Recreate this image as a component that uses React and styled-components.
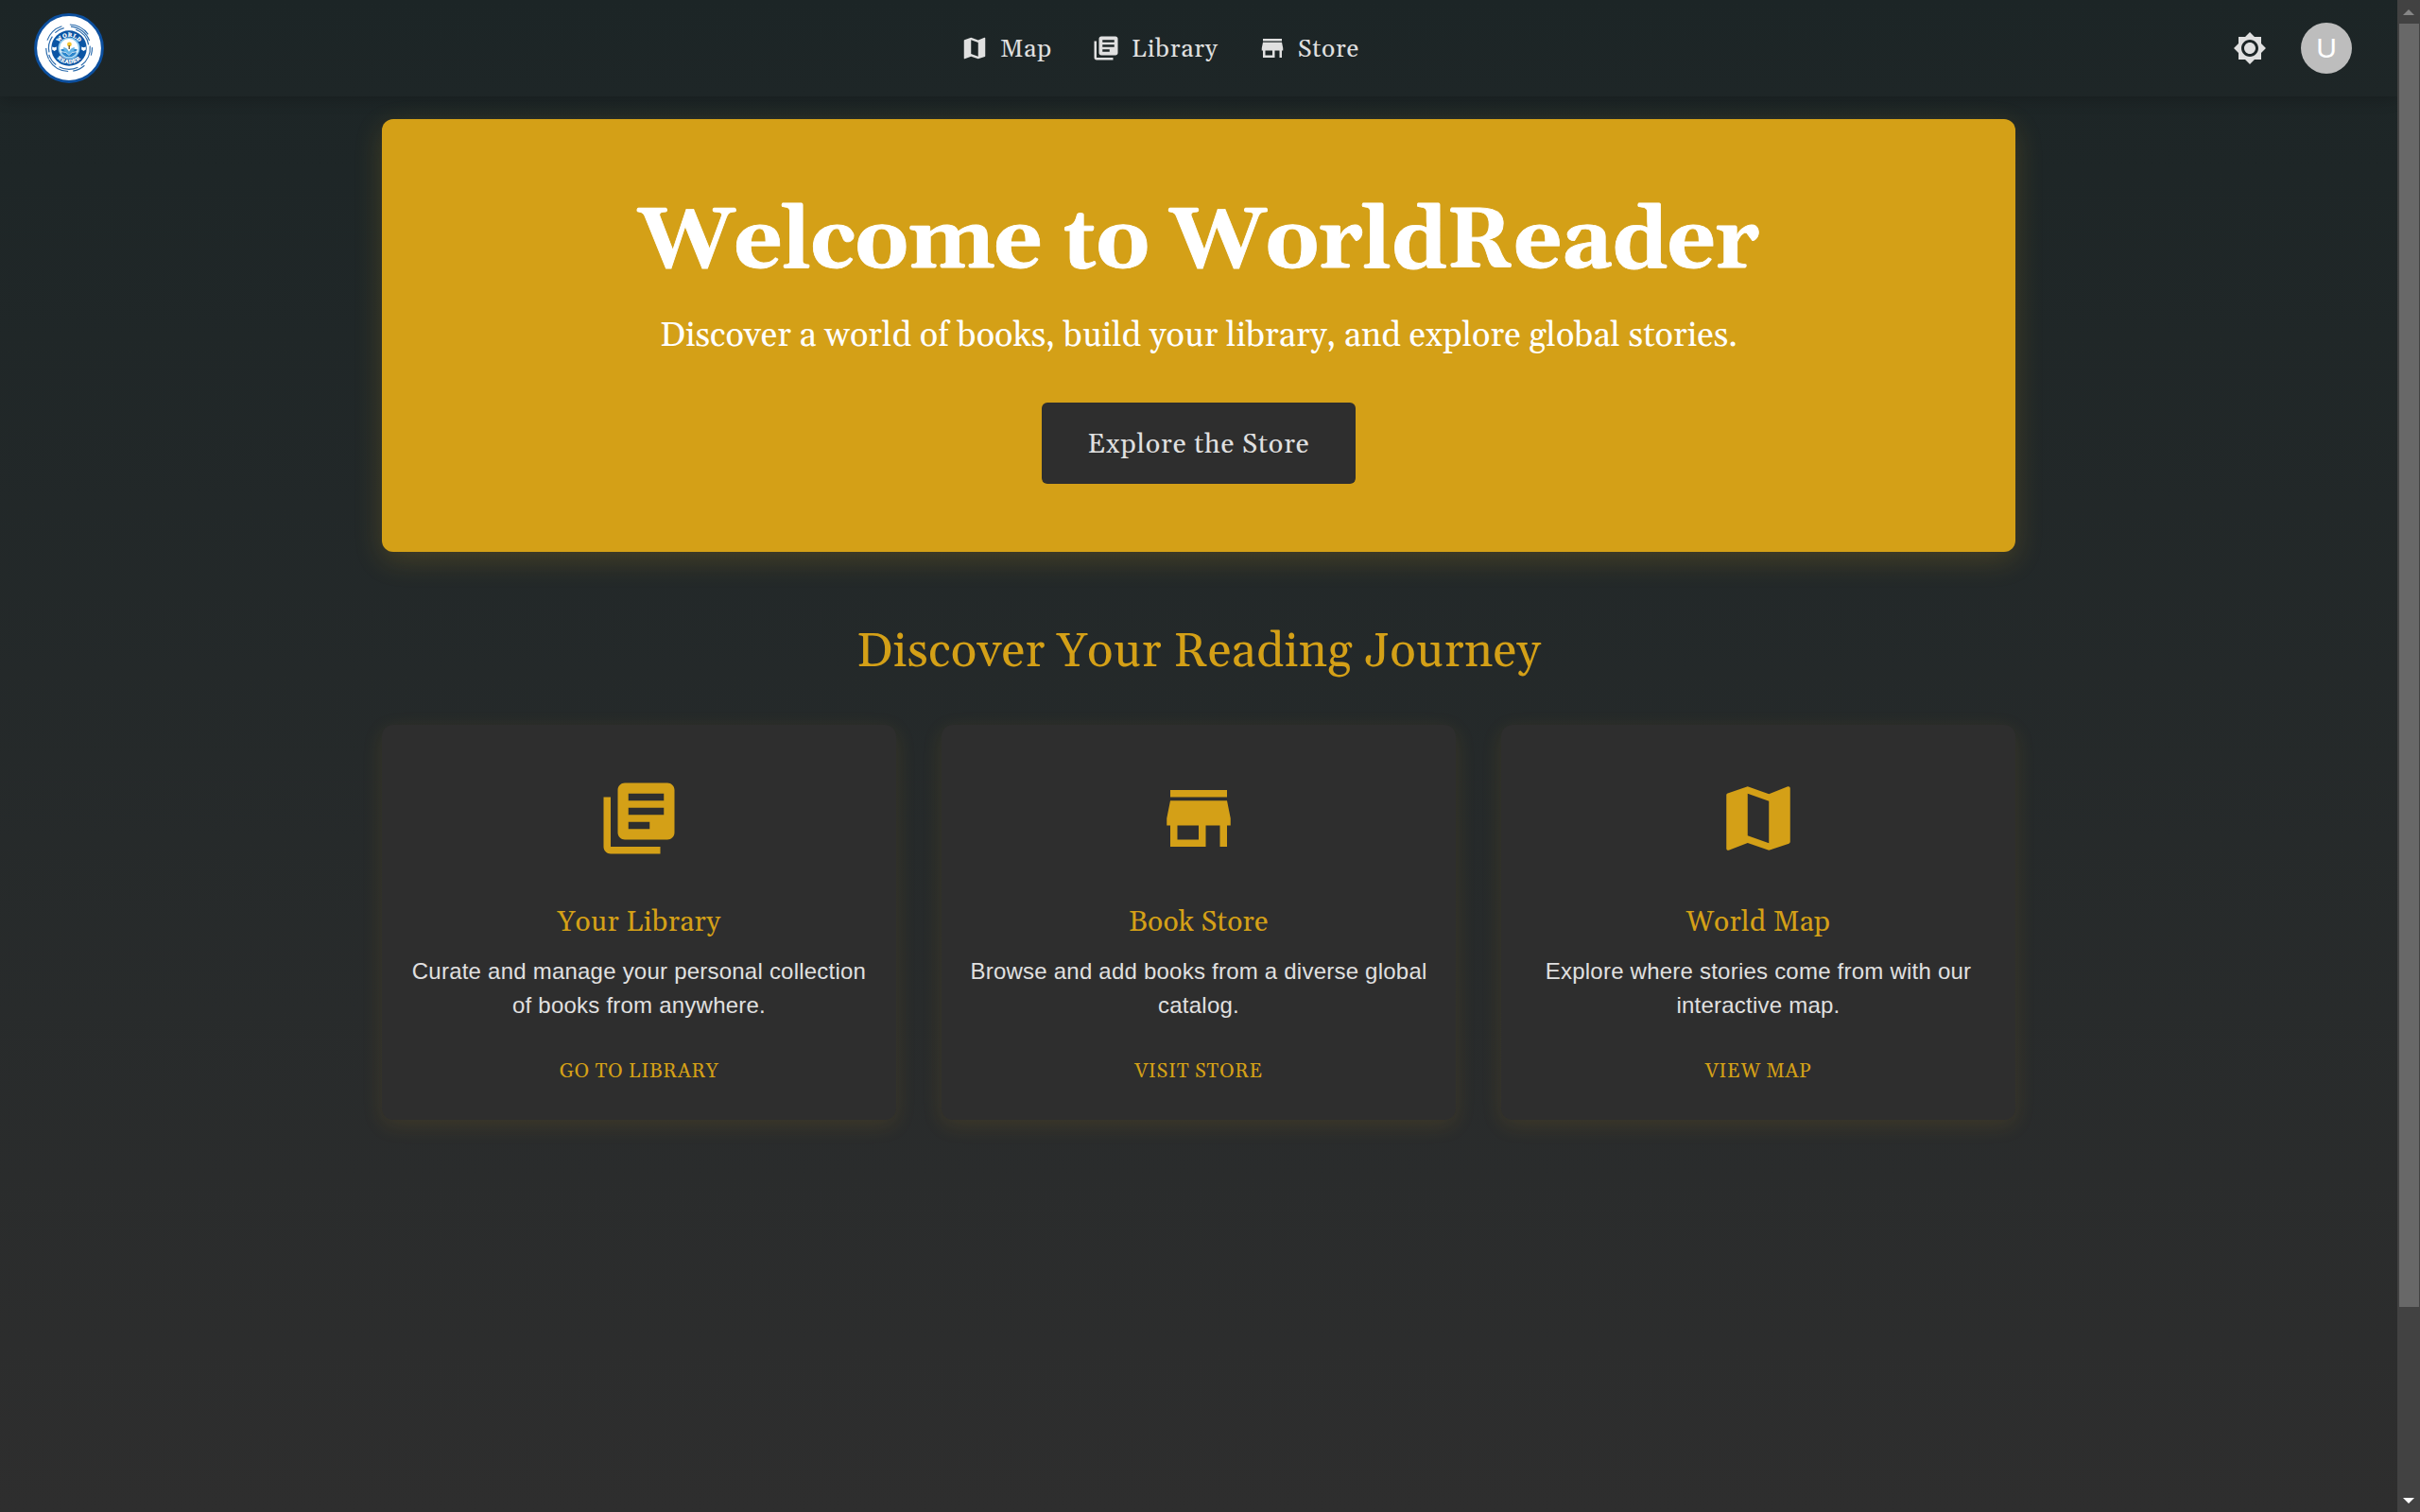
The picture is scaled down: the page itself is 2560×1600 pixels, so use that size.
import React from "react";
import styled, { createGlobalStyle } from "styled-components";

const GOLD = "#d4a017";
const SERIF = `Gelasio, Georgia, "Liberation Serif", serif`;
const SANS = `"Liberation Sans", Arial, sans-serif`;

const GlobalStyle = createGlobalStyle`
  *, *::before, *::after { box-sizing: border-box; }
  html, body { margin: 0; padding: 0; background: #2e2e2e; }
  body { font-family: ${SANS}; color: #e0e0e0; overflow: hidden; }
`;

const Window = styled.div`
  display: flex;
  height: 1600px;
  overflow: hidden;
`;

const Page = styled.div`
  flex: 1;
  min-width: 0;
  display: flex;
  flex-direction: column;
  background: linear-gradient(to bottom, #1c2526, #2e2e2e 1600px);
`;

const Header = styled.header`
  display: flex;
  align-items: center;
  justify-content: space-between;
  flex: none;
  height: 102px;
  padding: 0 36px;
  background: linear-gradient(to bottom, #1c2526, #1e2627);
  box-shadow: 0 3px 15px rgba(0, 0, 0, 0.2);
`;

const Nav = styled.nav`
  display: flex;
  gap: 24px;
`;

const NavLink = styled.a`
  display: flex;
  align-items: center;
  gap: 12px;
  padding: 9px 12px 9px 6px;
  color: #e0e0e0;
`;

const NavLabel = styled.span`
  padding-top: 3px;
  font: 400 26.4px/43.2px ${SERIF};
  letter-spacing: 0.02857em;
`;

const Actions = styled.div`
  display: flex;
  align-items: center;
  gap: 12px;
`;

const IconButton = styled.button`
  display: flex;
  padding: 12px;
  border: 0;
  background: none;
  color: #e0e0e0;
`;

const Avatar = styled.span`
  display: flex;
  align-items: center;
  justify-content: center;
  width: 54px;
  height: 54px;
  border-radius: 50%;
  background: #bdbdbd;
  color: #fff;
  font: 400 30px/30px ${SANS};
`;

const Icon = styled.svg`
  display: block;
  flex: none;
  width: ${(p) => p.$size}px;
  height: ${(p) => p.$size}px;
  fill: currentColor;
`;

const LogoSvg = styled.svg`
  display: block;
  width: 74px;
  height: 74px;
`;

const Container = styled.main`
  width: 1728px;
  margin: 24px auto 0;
`;

const Hero = styled.section`
  display: flex;
  flex-direction: column;
  align-items: center;
  padding: 72px;
  border-radius: 12px;
  background: ${GOLD};
  color: #fff;
  box-shadow: 0 9px 30px rgba(212, 160, 23, 0.2);
`;

const HeroTitle = styled.h1`
  margin: 0;
  padding: 5px 0 19px;
  font: 700 90px/108px ${SERIF};
  letter-spacing: -0.00833em;
  -webkit-text-stroke: 0.8px #fff;
`;

const HeroText = styled.p`
  margin: 0;
  padding: 2px 0 46px;
  font: 400 36px/48px ${SERIF};
`;

const HeroButton = styled.button`
  height: 86px;
  padding: 3px 48px 0;
  border: 0;
  border-radius: 6px;
  background: #2e2e2e;
  color: #e0e0e0;
  font: 400 28.8px/50px ${SERIF};
  letter-spacing: 0.02857em;
`;

const SectionTitle = styled.h2`
  margin: 75px 0 45px;
  color: ${GOLD};
  text-align: center;
  font: 400 51px/63px ${SERIF};
  letter-spacing: 0.00735em;
`;

const CardGrid = styled.div`
  display: grid;
  grid-template-columns: repeat(3, 1fr);
  gap: 48px;
`;

const Card = styled.article`
  display: flex;
  flex-direction: column;
  align-items: center;
  height: 418px;
  padding: 54px 24px 24px;
  border-radius: 12px;
  background: #2e2e2e;
  color: ${GOLD};
  text-align: center;
  box-shadow: 0 6px 22.5px rgba(212, 160, 23, 0.12);
`;

const CardTitle = styled.h3`
  margin: 41px 0 10px;
  font: 400 30px/48px ${SERIF};
  letter-spacing: 0.0075em;
`;

const CardText = styled.p`
  margin: 0 0 24px;
  color: #e0e0e0;
  font: 400 24px/36px ${SANS};
  letter-spacing: 0.00938em;
`;

const CardLink = styled.a`
  padding: 10px 12px 8px;
  font: 400 21px/36.75px ${SERIF};
  letter-spacing: 0.02857em;
  text-transform: uppercase;
`;

const Scrollbar = styled.div`
  display: flex;
  flex-direction: column;
  align-items: center;
  flex: none;
  width: 24px;
  background: #424242;
`;

const ScrollArrow = styled.div`
  display: flex;
  align-items: center;
  justify-content: center;
  flex: none;
  width: 24px;
  height: 25px;
  color: ${(p) => p.$color};
`;

const ScrollTrack = styled.div`
  flex: 1;
`;

const ScrollThumb = styled.div`
  width: 21px;
  height: 1358px;
  margin-left: 1px;
  background: #686868;
`;

const PATHS = {
  map: "M20.5 3l-.16.03L15 5.1 9 3 3.36 4.9c-.21.07-.36.25-.36.48V20.5c0 .28.22.5.5.5l.16-.03L9 18.9l6 2.1 5.64-1.9c.21-.07.36-.25.36-.48V3.5c0-.28-.22-.5-.5-.5zM15 19l-6-2.11V5l6 2.11V19z",
  library:
    "M4 6H2v14c0 1.1.9 2 2 2h14v-2H4V6zm16-4H8c-1.1 0-2 .9-2 2v12c0 1.1.9 2 2 2h12c1.1 0 2-.9 2-2V4c0-1.1-.9-2-2-2zm-1 9H9V9h10v2zm-4 4H9v-2h6v2zm4-8H9V5h10v2z",
  store: "M20 4H4v2h16V4zm1 10v-2l-1-5H4l-1 5v2h1v6h10v-6h4v6h2v-6h1zm-9 4H6v-4h6v4z",
  sun: "M20 8.69V4h-4.69L12 .69 8.69 4H4v4.69L.69 12 4 15.31V20h4.69L12 23.31 15.31 20H20v-4.69L23.31 12 20 8.69zM12 18c-3.31 0-6-2.69-6-6s2.69-6 6-6 6 2.69 6 6-2.69 6-6 6zm0-10c-2.21 0-4 1.79-4 4s1.79 4 4 4 4-1.79 4-4-1.79-4-4-4z",
};

const Glyph = ({ name, size }) => (
  <Icon viewBox="0 0 24 24" $size={size} aria-hidden="true">
    <path d={PATHS[name]} />
  </Icon>
);

// Arc of radius r round the logo's centre, angles in degrees clockwise from the right.
const ring = (r, from, to) => {
  const pt = (a) => {
    const t = (a * Math.PI) / 180;
    return `${(37 + r * Math.cos(t)).toFixed(2)} ${(37 + r * Math.sin(t)).toFixed(2)}`;
  };
  return `M${pt(from)}A${r} ${r} 0 ${to - from > 180 ? 1 : 0} 1 ${pt(to)}`;
};

const RINGS = [
  [25, -88, -36],
  [23, -85, -20],
  [21, -70, -10],
  [24.5, -2, 18],
  [22.3, -6, 55],
  [24.5, 48, 80],
  [22.3, 65, 118],
  [24.5, 92, 150],
  [22.3, 128, 162],
  [24.3, 152, 180],
  [21.5, 168, 215],
  [24.5, 200, 252],
  [22, 228, 256],
];

const Logo = () => (
  <LogoSvg viewBox="0 0 74 74" role="img" aria-label="World Reader">
    <defs>
      <path id="arc-top" d="M24.8 37a12.2 12.2 0 0 1 24.4 0" />
      <path id="arc-bottom" d="M20.6 37a16.4 16.4 0 0 0 32.8 0" />
    </defs>
    <circle cx="37" cy="37" r="35.4" fill="#fff" stroke="#0c4f9e" strokeWidth="3" />
    {RINGS.map(([r, a, b]) => (
      <path key={`${r}${a}`} d={ring(r, a, b)} fill="none" stroke="#2c6cad" strokeWidth="1.2" />
    ))}
    <circle cx="37" cy="37" r="18.7" fill="#0b55a4" />
    <g
      fill="#fff"
      stroke="#fff"
      strokeWidth="0.3"
      fontFamily='"Liberation Serif", serif'
      fontWeight="700"
      fontSize="6"
      textAnchor="middle"
    >
      <text letterSpacing="0.5">
        <textPath href="#arc-top" startOffset="50%">WORLD</textPath>
      </text>
      <text letterSpacing="0.5">
        <textPath href="#arc-bottom" startOffset="50%">READER</textPath>
      </text>
    </g>
    <path d="M19.2 35.4l2.3.8 2.3-.8v3.2l-2.3 1.3-2.3-1.3zM50.2 35.4l2.3.8 2.3-.8v3.2l-2.3 1.3-2.3-1.3z" fill="#fff" />
    <circle cx="37" cy="37" r="10.7" fill="#fff" stroke="#8cc9ee" strokeWidth="1.6" />
    <path d="M28.4 38.2q5.2-1.6 8.6 3.2 3.4-4.8 8.6-3.2l-1.2 4.6a9.4 9.4 0 0 1-14.8 0z" fill="#2b86cc" />
    <path d="M31 36q4.4.6 6 5 1.6-4.4 6-5l-1 4.2-5 3.4-5-3.4z" fill="#62b3e6" />
    <path d="M29.2 40.6q5 0 7.8 3.8 2.8-3.8 7.8-3.8" fill="none" stroke="#fff" strokeWidth=".8" />
    <circle cx="37.4" cy="33" r="2.4" fill="#f5c531" />
    <path d="M37.2 34v4" stroke="#4a4326" strokeWidth="1.2" />
  </LogoSvg>
);

const NAV = [
  ["map", "Map"],
  ["library", "Library"],
  ["store", "Store"],
];

const CARDS = [
  ["library", "Your Library", "Curate and manage your personal collection of books from anywhere.", "Go to Library"],
  ["store", "Book Store", "Browse and add books from a diverse global catalog.", "Visit Store"],
  ["map", "World Map", "Explore where stories come from with our interactive map.", "View Map"],
];

export default function App() {
  return (
    <Window>
      <GlobalStyle />
      <Page>
        <Header>
          <Logo />
          <Nav>
            {NAV.map(([icon, label]) => (
              <NavLink key={label}>
                <Glyph name={icon} size={30} />
                <NavLabel>{label}</NavLabel>
              </NavLink>
            ))}
          </Nav>
          <Actions>
            <IconButton aria-label="Toggle theme">
              <Glyph name="sun" size={36} />
            </IconButton>
            <IconButton aria-label="Account">
              <Avatar>U</Avatar>
            </IconButton>
          </Actions>
        </Header>
        <Container>
          <Hero>
            <HeroTitle>Welcome to WorldReader</HeroTitle>
            <HeroText>Discover a world of books, build your library, and explore global stories.</HeroText>
            <HeroButton>Explore the Store</HeroButton>
          </Hero>
          <SectionTitle>Discover Your Reading Journey</SectionTitle>
          <CardGrid>
            {CARDS.map(([icon, title, text, link]) => (
              <Card key={title}>
                <Glyph name={icon} size={90} />
                <CardTitle>{title}</CardTitle>
                <CardText>{text}</CardText>
                <CardLink>{link}</CardLink>
              </Card>
            ))}
          </CardGrid>
        </Container>
      </Page>
      <Scrollbar>
        <ScrollArrow $color="#868686">
          <svg width="12" height="6" viewBox="0 0 12 6">
            <path d="M0 6L6 0l6 6z" fill="currentColor" />
          </svg>
        </ScrollArrow>
        <ScrollTrack>
          <ScrollThumb />
        </ScrollTrack>
        <ScrollArrow $color="#fff">
          <svg width="12" height="6" viewBox="0 0 12 6">
            <path d="M0 0h12L6 6z" fill="currentColor" />
          </svg>
        </ScrollArrow>
      </Scrollbar>
    </Window>
  );
}
